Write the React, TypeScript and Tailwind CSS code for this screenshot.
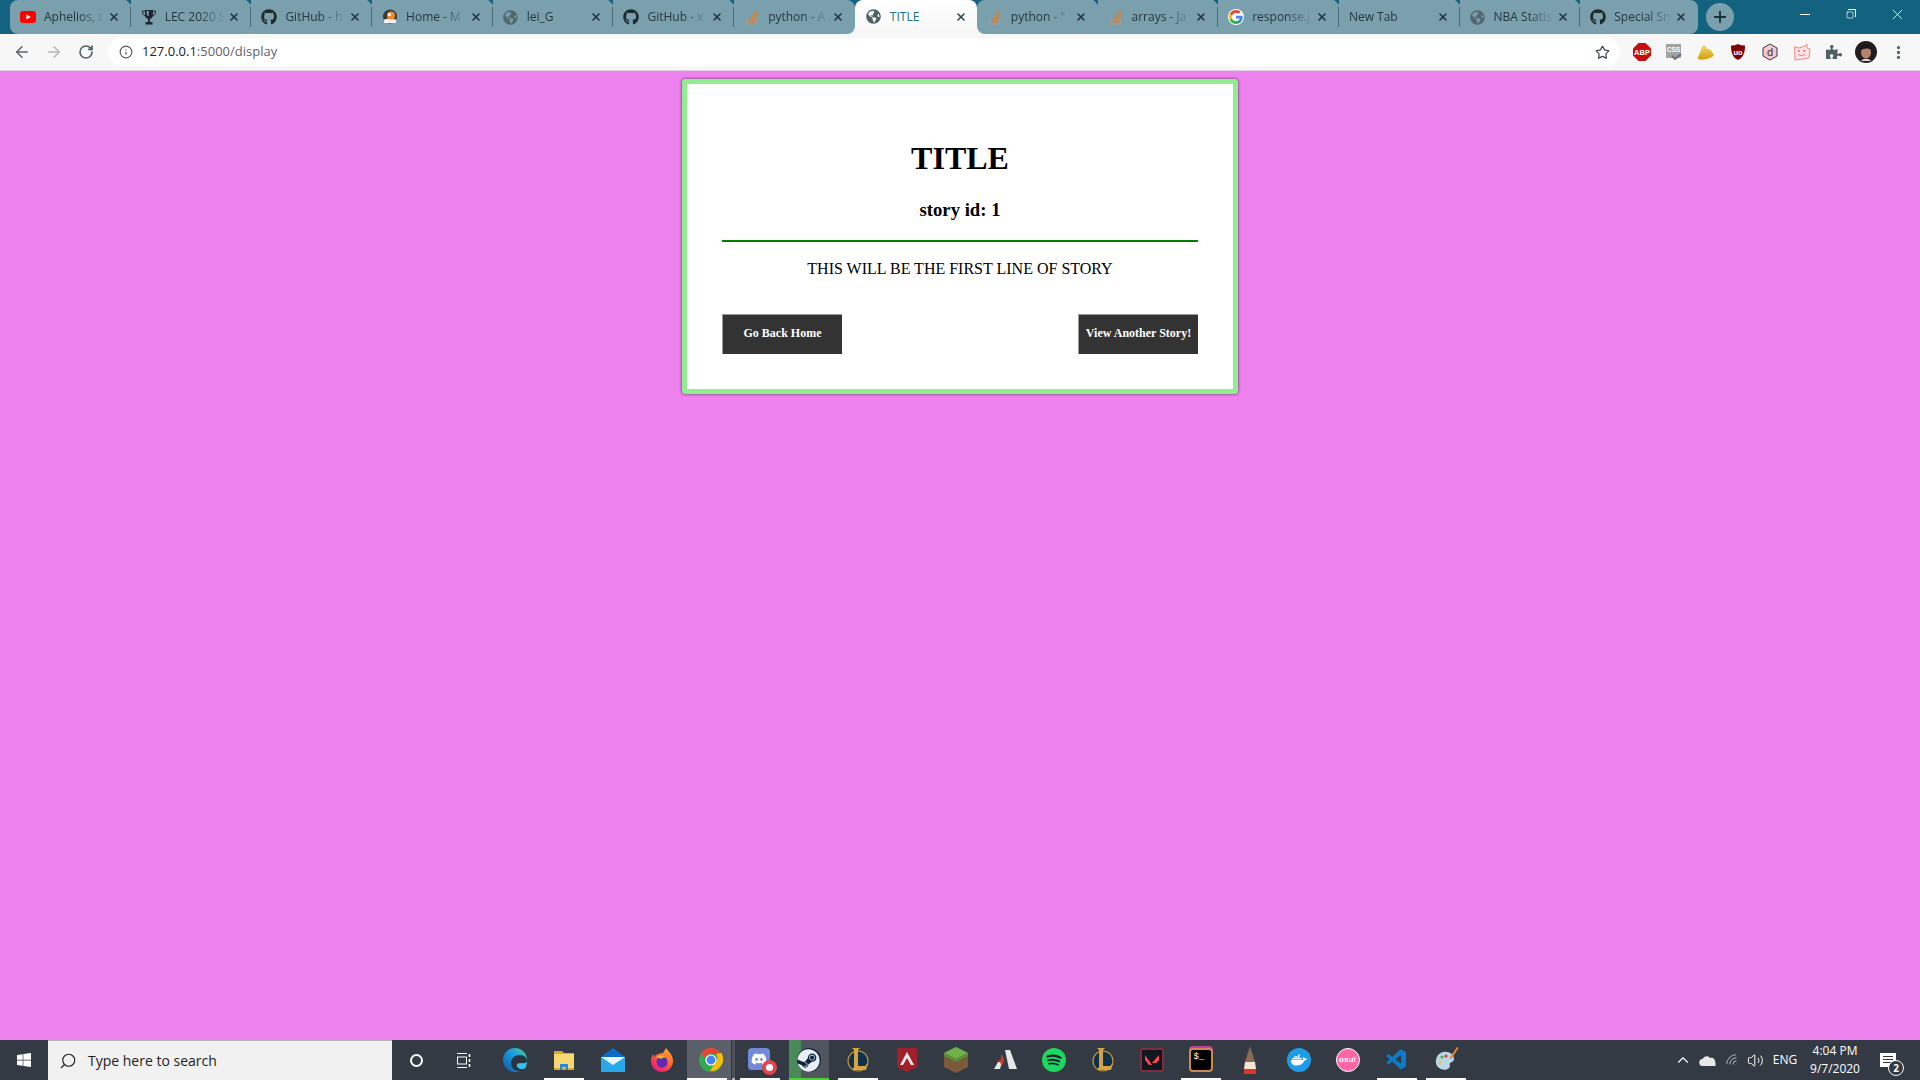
import React from 'react';
import { ArrowLeft, ArrowRight, ChevronUp, Info, MoreVertical, Plus, RotateCw, Search, Square, Star, Volume2, Wifi, X } from 'lucide-react';
import { FaDiscord, FaDocker, FaGithub, FaGlobeAmericas, FaPuzzlePiece, FaSteam, FaWindows } from 'react-icons/fa';
import { VscVscode } from 'react-icons/vsc';

const YouTube = () => (
  <svg width="16" height="16" viewBox="0 0 16 16">
    <rect x="0" y="2" width="16" height="12" rx="3" fill="#f00" />
    <path d="M6.4 5.4 10.8 8l-4.4 2.6z" fill="#fff" />
  </svg>
);

const Trophy = () => (
  <svg width="16" height="16" viewBox="0 0 16 16">
    <path d="M4 1h8v5c0 2.4-1.7 4-4 4S4 8.400 4 6z" fill="#1c2733" />
    <path d="M5.500 2h2v5h-1z" fill="#8fb7d9" />
    <path d="M4 2H1.500c0 3 1 4.500 3 5M12 2h2.500c0 3-1 4.500-3 5" fill="none" stroke="#1c2733" />
    <rect x="7" y="10" width="2" height="3" fill="#1c2733" />
    <rect x="4.500" y="13" width="7" height="2.500" fill="#1c2733" />
  </svg>
);

const Penguin = () => (
  <svg width="16" height="16" viewBox="0 0 16 16">
    <circle cx="8" cy="7.500" r="7" fill="#3a3a3a" />
    <path d="M2 11c2-2 10-2 12 0v3H2z" fill="#f4f1ec" />
    <circle cx="9" cy="6.500" r="4" fill="#f08a24" />
    <circle cx="7.500" cy="5.500" r="1.600" fill="#fff" />
  </svg>
);

const GoogleG = () => (
  <svg width="16" height="16" viewBox="0 0 48 48">
    <circle cx="24" cy="24" r="24" fill="#fff" />
    <path fill="#4285F4" d="M44 24.500c0-1.500-.1-2.900-.4-4.300H24v8.100h11.200c-.5 2.600-2 4.800-4.200 6.300v5.200h6.800c4-3.700 6.200-9.100 6.200-15.300z" />
    <path fill="#34A853" d="M24 45c5.700 0 10.400-1.900 13.800-5.100L31 34.700c-1.900 1.300-4.300 2-7 2-5.400 0-10-3.600-11.600-8.500H5.400v5.300C8.800 40.300 15.900 45 24 45z" />
    <path fill="#FBBC05" d="M12.400 28.200c-.4-1.300-.7-2.700-.7-4.200s.3-2.900.7-4.200v-5.300h-7C4 17.300 3 20.500 3 24s1 6.700 2.400 9.500z" />
    <path fill="#EA4335" d="M24 11.300c3 0 5.800 1 7.900 3.100l6-6C34.400 5.100 29.700 3 24 3 15.900 3 8.800 7.700 5.400 14.500l7 5.300c1.600-4.900 6.200-8.500 11.600-8.500z" />
  </svg>
);

const StackOverflow = () => (
  <svg width="16" height="16" viewBox="0 0 16 16" fill="none">
    <path d="M2.500 10v5h10v-5" stroke="#a59a8f" strokeWidth="1.200" />
    <path d="M4.500 13h6M4.700 10.800l6 .5M5.300 8.500l5.800 1.500M6.500 6l5 3M8.500 3.600l4 4.200M11 1.500l2.200 5" stroke="#e0812a" strokeWidth="1.200" />
  </svg>
);

const tabs = [
  { title: 'Aphelios, t', icon: <YouTube /> },
  { title: 'LEC 2020 S', icon: <Trophy /> },
  { title: 'GitHub - h', icon: <FaGithub size={16} className="text-[#1f2a30]" /> },
  { title: 'Home - M', icon: <Penguin /> },
  { title: 'lei_G', icon: <FaGlobeAmericas size={15} className="text-[#52686f]" /> },
  { title: 'GitHub - x', icon: <FaGithub size={16} className="text-[#1f2a30]" /> },
  { title: 'python - A', icon: <StackOverflow /> },
  { title: 'TITLE', icon: <FaGlobeAmericas size={15} className="text-[#4f6162]" />, active: true },
  { title: 'python - "', icon: <StackOverflow /> },
  { title: 'arrays - Ja', icon: <StackOverflow /> },
  { title: 'response.j', icon: <GoogleG /> },
  { title: 'New Tab', noIcon: true },
  { title: 'NBA Statis', icon: <FaGlobeAmericas size={15} className="text-[#52686f]" /> },
  { title: 'Special Sni', icon: <FaGithub size={16} className="text-[#1f2a30]" /> },
];

const TabStrip = () => (
  <div className="flex h-[34px] bg-[#13627f] pl-[10px]">
    {tabs.map((tab, i) => {
      const beforeActive = tabs[i + 1]?.active;
      const afterActive = tabs[i - 1]?.active;
      const last = i === tabs.length - 1;
      if (tab.active) {
        return (
          <div key={i} className="z-10 flex h-[38px] w-[122px] items-center rounded-t-lg bg-[linear-gradient(#ffffff,#f6f6f6)] pb-[5px] pl-[11px] pr-[10px]">
            <div className="w-4 shrink-0">{tab.icon}</div>
            <span className="ml-2 flex-1 text-[12px] text-[#1f6f8c]">{tab.title}</span>
            <X size={12} strokeWidth={3.2} className="shrink-0 text-[#2f4a50]" />
          </div>
        );
      }
      const outer = beforeActive || afterActive ? 'bg-[linear-gradient(#13627f_50%,#f6f6f6_50%)]' : '';
      const shape = i === 0 ? 'rounded-l-lg' : beforeActive ? 'rounded-r-lg' : afterActive ? 'rounded-l-lg' : last ? 'rounded-r-lg' : '';
      return (
        <div key={i} className={`relative ${last ? 'w-[118px]' : 'w-[120.7px]'} ${outer}`}>
          <div className={`flex h-full items-center bg-[#7a9fad] pl-[10px] pr-[11px] ${shape}`}>
            {!tab.noIcon && <div className="mr-2 w-4 shrink-0">{tab.icon}</div>}
            <span className="flex-1 whitespace-nowrap text-[12px] text-[#26383f] [mask-image:linear-gradient(to_right,black_55%,transparent_95%)]">{tab.title}</span>
            <X size={12} strokeWidth={3.2} className="shrink-0 text-[#22343b]" />
          </div>
          {!last && !beforeActive && !afterActive && <div className="absolute right-0 top-[7px] h-5 w-px bg-[#4a6a76]" />}
          {!last && <div className="absolute -right-[4px] -top-[5px] h-2 w-2 rotate-45 bg-[#13627f]" />}
        </div>
      );
    })}
    <div className="ml-[8px] mt-[3px] flex h-[28px] w-[28px] items-center justify-center rounded-full bg-[#7a9fad]">
      <Plus size={18} strokeWidth={2.4} className="text-[#16303a]" />
    </div>
    <div className="ml-auto flex h-full items-start text-white">
      <div className="flex h-[28px] w-[46px] items-center justify-center"><div className="h-px w-[10px] bg-white" /></div>
      <div className="flex h-[28px] w-[46px] items-center justify-center">
        <div className="relative h-[10px] w-[10px]">
          <Square size={8} strokeWidth={2} className="absolute bottom-0 left-0" />
          <div className="absolute right-0 top-0 h-[8px] w-[8px] border-r border-t border-white" />
        </div>
      </div>
      <div className="flex h-[28px] w-[46px] items-center justify-center"><X size={17} strokeWidth={1.2} /></div>
    </div>
  </div>
);

const Abp = () => (
  <svg width="18" height="18" viewBox="0 0 18 18">
    <path d="M5.500 0h7L18 5.500v7L12.500 18h-7L0 12.500v-7z" fill="#c70d0d" />
    <text x="9" y="12" textAnchor="middle" fontSize="7.500" fontWeight="700" fill="#fff" fontFamily="Liberation Sans, sans-serif">ABP</text>
  </svg>
);

const CssBadge = () => (
  <svg width="18" height="18" viewBox="0 0 18 18">
    <rect x="1" y="1" width="15" height="14" fill="#a2a2a2" />
    <text x="8.500" y="9" textAnchor="middle" fontSize="6.500" fontWeight="700" fill="#fff" fontFamily="Liberation Sans, sans-serif">CSS</text>
    <path d="M7 13l3 3 6-5" fill="none" stroke="#6e6e6e" strokeWidth="2" />
  </svg>
);

const GoldHeart = () => (
  <svg width="18" height="18" viewBox="0 0 18 18">
    <defs>
      <linearGradient id="gold" x1="0" y1="0" x2="0" y2="1">
        <stop offset="0" stopColor="#f6dc63" />
        <stop offset="1" stopColor="#d29d10" />
      </linearGradient>
    </defs>
    <path d="M1 16c0-3 2-6 5-14 2 0 3 2 4 4 2-1 5 2 7 6-1 3-12 6-16 4z" fill="url(#gold)" />
  </svg>
);

const UblockShield = () => (
  <svg width="16" height="18" viewBox="0 0 16 18">
    <path d="M8 1c2 1 5 1.500 7 1.500C15 10 13 15 8 17 3 15 1 10 1 2.500 3 2.500 6 2 8 1z" fill="#800000" />
    <text x="8" y="11.500" textAnchor="middle" fontSize="7.500" fontWeight="700" fill="#fff" fontFamily="Liberation Sans, sans-serif">uo</text>
  </svg>
);

const HexD = () => (
  <svg width="16" height="18" viewBox="0 0 16 18">
    <path d="M8 1l7 4v8l-7 4-7-4V5z" fill="#f7c6cf" stroke="#3b3b3b" />
    <text x="8" y="13" textAnchor="middle" fontSize="11" fill="#333" fontFamily="Liberation Sans, sans-serif">d</text>
  </svg>
);

const PigFace = () => (
  <svg width="18" height="18" viewBox="0 0 18 18">
    <path d="M1.500 3.500 6 5l6-2 2-2v4l3 1-1 9-6 1-8 1z" fill="#fde4e4" stroke="#ee8a8a" />
    <circle cx="6" cy="8" r="1" fill="#e66" />
    <circle cx="11" cy="8" r="1" fill="#e66" />
    <path d="M5 11c2 2 5 2 7 0" fill="none" stroke="#e66" />
  </svg>
);

const Avatar = () => (
  <svg width="22" height="22" viewBox="0 0 22 22">
    <circle cx="11" cy="11" r="11" fill="#241c1e" />
    <ellipse cx="11" cy="11.500" rx="5" ry="6" fill="#b5836c" />
    <path d="M5.500 9c0-4 3-5.500 6-5.500s5 2 5 5.500c-3-2-7-2-11 0z" fill="#1a1416" />
    <path d="M6 20c2-3 8-3 10 0z" fill="#d9d9df" />
  </svg>
);

const extensions = [
  <Abp />,
  <CssBadge />,
  <GoldHeart />,
  <UblockShield />,
  <HexD />,
  <PigFace />,
  <FaPuzzlePiece size={16} className="text-[#4f6162]" />,
  <Avatar />,
  <MoreVertical size={17} strokeWidth={2.6} className="text-[#4f6162]" />,
];

const Toolbar = () => (
  <div className="flex h-[37px] items-center border-b border-[#e3d3e3] bg-[#f7f7f7]">
    <div className="flex w-[108px] shrink-0 items-center pl-[13px]">
      <ArrowLeft size={18} strokeWidth={2} className="text-[#5a6468]" />
      <ArrowRight size={18} strokeWidth={2} className="ml-[14px] text-[#b4b8ba]" />
      <RotateCw size={16} strokeWidth={2.4} className="ml-[15px] text-[#4f6162]" />
    </div>
    <div className="flex h-[28px] w-[1512px] shrink-0 items-center rounded-full bg-white pl-[11px] pr-[10px]">
      <Info size={14} strokeWidth={2} className="text-[#55595c]" />
      <span className="ml-[9px] text-[13px] text-[#202124]">127.0.0.1<span className="text-[#5f6368]">:5000/display</span></span>
      <Star size={15} strokeWidth={2} className="ml-auto text-[#3d4a4f]" />
    </div>
    <div className="ml-[6px] flex items-center">
      {extensions.map((icon, i) => (
        <div key={i} className="flex w-[32px] justify-center">{icon}</div>
      ))}
    </div>
  </div>
);

const StoryCard = () => (
  <div className="mx-auto mt-[8px] h-[315px] w-[556px] rounded-[3px] border-[5px] border-[#90ee90] bg-white px-[35px] font-['Liberation_Serif',serif] text-black shadow-[0_0_3px_rgba(0,0,0,0.7)]">
    <h1 className="mt-[56px] text-center text-[32px] font-bold leading-[37px]">TITLE</h1>
    <h3 className="mt-[22px] text-center text-[18.720px] font-bold leading-[21px]">story id: 1</h3>
    <div className="mt-[20px] h-[2px] bg-[#008000]" />
    <p className="mt-[18px] text-center text-[16px] leading-[18px]">THIS WILL BE THE FIRST LINE OF STORY</p>
    <div className="mt-[36px] flex justify-between">
      <button className="h-[40px] w-[120px] border-l border-t border-[#9a9a9a] bg-[#333333] pb-[3px] text-[12px] font-bold text-white">Go Back Home</button>
      <button className="h-[40px] w-[120px] border-l border-t border-[#9a9a9a] bg-[#333333] pb-[3px] text-[12px] font-bold text-white">View Another Story!</button>
    </div>
  </div>
);

const Edge = () => (
  <svg width="24" height="24" viewBox="0 0 24 24">
    <defs>
      <linearGradient id="edge" x1="0" y1="1" x2="1" y2="0">
        <stop offset="0" stopColor="#0c59a4" />
        <stop offset="0.6" stopColor="#1b9de2" />
        <stop offset="1" stopColor="#4fd77a" />
      </linearGradient>
    </defs>
    <circle cx="12" cy="12" r="12" fill="url(#edge)" />
    <path d="M24 13c0-4-4-6-7-6-5 0-9 3-9 8 0 4 3 8 8 8 3 0 5-1 6-2-3 1-8 0-8-4 0-2 2-2 5-2 3 0 5 0 5-2z" fill="#2b343d" />
    <path d="M24 14c-1 1-3 1.500-7 1.500-3 0-4 1-3 3 1 2 5 3 8 2 1-2 2-4 2-6.500z" fill="#35c1f1" />
  </svg>
);

const Folder = () => (
  <svg width="24" height="24" viewBox="0 0 24 24">
    <path d="M2 3h8l2 2h10v3H2z" fill="#e0a52a" />
    <rect x="2" y="6" width="20" height="16" fill="#f8d775" />
    <rect x="2" y="20" width="20" height="2" fill="#e0a52a" />
    <path d="M8 22v-6h8v6h-2.500v-3h-3v3z" fill="#2b88d8" />
  </svg>
);

const Mail = () => (
  <svg width="24" height="24" viewBox="0 0 24 24">
    <path d="M12 0 24 9v15H0V9z" fill="#0a6cc4" />
    <rect y="9" width="24" height="15" fill="#28a8ea" />
    <path d="M0 9h24l-12 8z" fill="#eaf6fd" />
  </svg>
);

const Firefox = () => (
  <svg width="24" height="24" viewBox="0 0 24 24">
    <defs>
      <linearGradient id="ff" x1="0.800" y1="0" x2="0.200" y2="1">
        <stop offset="0" stopColor="#ffb02e" />
        <stop offset="0.5" stopColor="#ff5a35" />
        <stop offset="1" stopColor="#e31587" />
      </linearGradient>
    </defs>
    <path d="M16 0c3 4 7 7 7 13a11 11 0 1 1-22 0c0-3 1-5 2-7l1 3c2-3 6-4 9-4 1-2 2-3 3-5z" fill="url(#ff)" />
    <circle cx="12" cy="14" r="5.500" fill="#5b2bb5" />
    <path d="M6 9c3-2 8-2 10 0-2 0-4 1-5 2z" fill="#ffb02e" />
  </svg>
);

const Chrome = () => (
  <svg width="24" height="24" viewBox="0 0 24 24">
    <circle cx="12" cy="12" r="12" fill="#34a853" />
    <path d="M12 0a12 12 0 0 1 10.400 6H12a6 6 0 0 0-5.800 4.500L2.300 5A12 12 0 0 1 12 0z" fill="#ea4335" />
    <path d="M22.400 6A12 12 0 0 1 11 24l5.300-8.500A6 6 0 0 0 17 7z" fill="#fbbc05" transform="translate(0 -1)" />
    <circle cx="12" cy="12" r="5.600" fill="#fff" />
    <circle cx="12" cy="12" r="4.400" fill="#4285f4" />
  </svg>
);

const Discord = () => (
  <div className="relative h-[24px] w-[24px]">
    <div className="flex h-[22px] w-[22px] items-center justify-center rounded-[4px] bg-[#7289da]">
      <FaDiscord size={16} className="text-white" />
    </div>
    <div className="absolute -bottom-[3px] -right-[5px] flex h-[15px] w-[15px] items-center justify-center rounded-full bg-[#e0474c]">
      <div className="h-[7px] w-[7px] rounded-full bg-white" />
    </div>
  </div>
);

const League = () => (
  <svg width="24" height="26" viewBox="0 0 24 26">
    <circle cx="12" cy="14" r="10" fill="#10314a" stroke="#c8963c" strokeWidth="1.200" />
    <path d="M6 1h8l-2 2v16h7l3-3-2 7H6l2-3V3z" fill="#d6a344" />
  </svg>
);

const Apex = () => (
  <svg width="22" height="24" viewBox="0 0 22 24">
    <path d="M1 0h20v19l-10 5-10-5z" fill="#a1202c" />
    <path d="M11 4 18 17h-3l-4-7-4 7H4z" fill="#f5e9e9" />
  </svg>
);

const Grass = () => (
  <svg width="24" height="26" viewBox="0 0 24 26">
    <path d="M12 0 24 6v14l-12 6L0 20V6z" fill="#7a5a3a" />
    <path d="M12 0 24 6l-12 6L0 6z" fill="#6fb04a" />
    <path d="M0 6l12 6v3L0 9zM24 6l-12 6v3l12-6z" fill="#5a8f3a" />
  </svg>
);

const Arena = () => (
  <svg width="24" height="22" viewBox="0 0 24 22">
    <path d="M12 1h5l7 19h-8z" fill="#e8e8e8" />
    <path d="M1 20l4-7h4l-2 7z" fill="#e8e8e8" />
    <path d="M8 5c1 2 3 3 3 6 0 2-1 4-2 6-1-2-2-3-2-5-1 0-2 0-2-1 1 0 3 0 3-1z" fill="#d0392b" />
  </svg>
);

const Spotify = () => (
  <svg width="24" height="24" viewBox="0 0 24 24" fill="none" stroke="#17212b" strokeLinecap="round">
    <circle cx="12" cy="12" r="12" fill="#1ed760" stroke="none" />
    <path d="M5.500 8.500c4-1.200 9-1 13 1.200" strokeWidth="2.200" />
    <path d="M6.200 12.300c3.500-1 7.500-.7 11 1.100" strokeWidth="1.900" />
    <path d="M6.800 15.800c3-.7 6.300-.5 9.200 1" strokeWidth="1.600" />
  </svg>
);

const Valorant = () => (
  <div className="flex h-[24px] w-[24px] items-center justify-center rounded-[2px] border-2 border-[#7e2d40] bg-[#10171f]">
    <svg width="14" height="12" viewBox="0 0 14 12">
      <path d="M0 1 7 11H4L0 6z" fill="#ff4655" />
      <path d="M14 1v5l-3 3H7z" fill="#ff4655" />
    </svg>
  </div>
);

const Terminal = () => (
  <div className="flex h-[24px] w-[24px] items-start rounded-[4px] border-2 border-[#c98a4b] bg-black pl-[3px] pt-[2px] font-['Liberation_Mono',monospace] text-[9px] leading-[10px] text-white shadow-[0_-2px_0_#c040a0]">$_</div>
);

const Pencil = () => (
  <svg width="14" height="28" viewBox="0 0 14 28">
    <path d="M7 0 12 16H2z" fill="#8a6a55" />
    <path d="M2 16h10l1 7H1z" fill="#f3e4d4" />
    <path d="M1 23h12v5H1z" fill="#e0342b" />
  </svg>
);

const Palette = () => (
  <svg width="26" height="26" viewBox="0 0 26 26">
    <path d="M10 5c6-1 11 2 11 7 0 3-3 3-4 4s1 3-1 5c-3 3-9 2-12-2C1 14 4 6 10 5z" fill="#b9d6e6" />
    <circle cx="9" cy="10" r="1.600" fill="#4caf50" />
    <circle cx="13" cy="9" r="1.600" fill="#e53935" />
    <circle cx="7" cy="15" r="1.600" fill="#fbc02d" />
    <path d="M24 0l1.500 1-7 11-2-1z" fill="#e08a2e" />
  </svg>
);

const TaskIcon = ({ children, line }: { children: React.ReactNode; line?: boolean }) => (
  <div className="relative flex h-full w-[49px] shrink-0 items-center justify-center">
    {children}
    {line && <div className="absolute bottom-0 left-[5px] h-[2px] w-[40px] bg-white" />}
  </div>
);

const Taskbar = () => (
  <div className="flex h-[40px] items-center bg-[#343a44] text-white">
    <div className="flex h-full w-[48px] items-center justify-center">
      <FaWindows size={16} />
    </div>
    <div className="flex h-full w-[344px] items-center border-t border-[#b5b5b5] bg-[#f1f1f1] pl-[11px] font-['Open_Sans',sans-serif] text-[14px] text-[#222]">
      <Search size={18} strokeWidth={1.5} className="-scale-x-100" />
      <span className="ml-[11px]">Type here to search</span>
    </div>
    <div className="flex h-full w-[48px] items-center justify-center">
      <div className="h-[13px] w-[13px] rounded-full border-2 border-white" />
    </div>
    <div className="flex h-full w-[48px] items-center justify-center">
      <svg width="14" height="15" viewBox="0 0 14 15" fill="none" stroke="#fff">
        <path d="M0 .5h10M0 14.500h10" />
        <rect x=".5" y="4" width="9" height="7" />
        <path d="M12.500 1v3M12.500 6v3M12.500 11v3" strokeWidth="1.600" />
      </svg>
    </div>
    <div className="ml-[2px] flex h-full">
      <TaskIcon><Edge /></TaskIcon>
      <TaskIcon line><Folder /></TaskIcon>
      <TaskIcon><Mail /></TaskIcon>
      <TaskIcon><Firefox /></TaskIcon>
      <div className="relative flex h-full w-[49px] shrink-0 items-center justify-center bg-[linear-gradient(to_right,#343a44_1px,#5a5f68_1px,#5a5f68_45px,#2c3038_45px,#2c3038_46px,#4c5059_46px)]">
        <Chrome />
        <div className="absolute bottom-0 left-[1px] h-[2px] w-[40px] bg-white" />
        <div className="absolute bottom-0 left-[46px] h-[2px] w-[3px] bg-[#bbbbbb]" />
      </div>
      <TaskIcon line><Discord /></TaskIcon>
      <div className="relative flex h-full w-[49px] shrink-0 items-center justify-center bg-[linear-gradient(to_right,#343a44_5px,#4a8a5a_5px,#4a8a5a_17px,#50555e_17px,#50555e_45px,#343a44_45px)]">
        <div className="flex h-[24px] w-[24px] items-center justify-center rounded-full bg-[#10253f]">
          <FaSteam size={23} className="text-[#e8eef4]" />
        </div>
        <div className="absolute bottom-0 left-[5px] h-[2px] w-[40px] bg-[#4cd137]" />
      </div>
      <TaskIcon line><League /></TaskIcon>
      <TaskIcon><Apex /></TaskIcon>
      <TaskIcon><Grass /></TaskIcon>
      <TaskIcon><Arena /></TaskIcon>
      <TaskIcon><Spotify /></TaskIcon>
      <TaskIcon><League /></TaskIcon>
      <TaskIcon><Valorant /></TaskIcon>
      <TaskIcon line><Terminal /></TaskIcon>
      <TaskIcon><Pencil /></TaskIcon>
      <TaskIcon>
        <div className="flex h-[24px] w-[24px] items-center justify-center rounded-full bg-[#1d9de8]">
          <FaDocker size={16} className="text-white" />
        </div>
      </TaskIcon>
      <TaskIcon>
        <div className="flex h-[24px] w-[24px] items-center justify-center rounded-full border border-white bg-[#ff66aa] font-['Liberation_Sans',sans-serif] text-[8px] font-bold text-white">osu!</div>
      </TaskIcon>
      <TaskIcon line><VscVscode size={24} className="text-[#0a7cc8]" /></TaskIcon>
      <TaskIcon line><Palette /></TaskIcon>
    </div>
    <div className="ml-auto flex h-full items-center pr-[9px] font-['Open_Sans',sans-serif]">
      <div className="flex w-[24px] justify-center"><ChevronUp size={18} strokeWidth={1.5} /></div>
      <div className="flex w-[24px] justify-center">
        <svg width="17" height="11" viewBox="0 0 17 11">
          <path d="M4 11a3.500 3.500 0 0 1-.5-7C5 1 9 0 11 3c3-1 6 1 5.500 8z" fill="#e8e8e8" />
        </svg>
      </div>
      <div className="flex w-[26px] justify-center"><Wifi size={15} strokeWidth={1.5} className="-rotate-45 text-[#bbbbbb]" /></div>
      <div className="flex w-[20px] justify-center"><Volume2 size={17} strokeWidth={1.4} /></div>
      <div className="w-[40px] text-center text-[12px]">ENG</div>
      <div className="flex w-[60px] flex-col items-center text-[12px] leading-[18px]">
        <span>4:04 PM</span>
        <span>9/7/2020</span>
      </div>
      <div className="flex w-[46px] justify-center">
        <div className="relative h-[14px] w-[16px] bg-white">
          <div className="absolute left-[3px] top-[3px] h-px w-[10px] bg-[#333]" />
          <div className="absolute left-[3px] top-[6px] h-px w-[10px] bg-[#333]" />
          <div className="absolute left-[3px] top-[9px] h-px w-[10px] bg-[#333]" />
          <div className="absolute -bottom-[9px] -right-[8px] flex h-[16px] w-[16px] items-center justify-center rounded-full border border-white bg-[#343a44] text-[10px] font-bold">2</div>
        </div>
      </div>
    </div>
  </div>
);

export default function App() {
  return (
    <div className="flex h-screen flex-col overflow-hidden bg-[#ee82ee] font-['Open_Sans',sans-serif]">
      <TabStrip />
      <Toolbar />
      <main className="flex-1">
        <StoryCard />
      </main>
      <Taskbar />
    </div>
  );
}
